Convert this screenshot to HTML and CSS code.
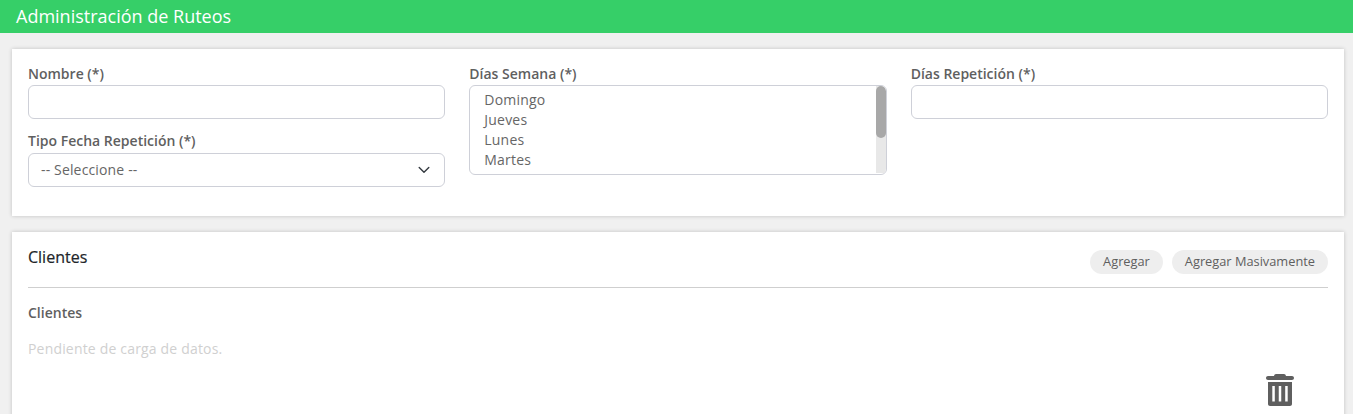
FILE: index.html
```html
<!DOCTYPE html>
<html lang="es">
<head>
<meta charset="utf-8">
<title>Administración de Ruteos</title>
<link rel="stylesheet" href="styles.css">
</head>
<body>
<header class="topbar">Administración de Ruteos</header>
<main class="content">
  <section class="card form-card">
    <div class="col">
      <label class="label">Nombre (*)</label>
      <div class="input"></div>
      <label class="label second">Tipo Fecha Repetición (*)</label>
      <div class="input select">
        <span>-- Seleccione --</span>
        <svg class="chevron" width="12" height="8" viewBox="0 0 12 8"><path d="M1.200 1.500l4.800 4.800 4.800-4.800" fill="none" stroke="#343a40" stroke-width="1.400" stroke-linecap="round" stroke-linejoin="round"/></svg>
      </div>
    </div>
    <div class="col">
      <label class="label">Días Semana (*)</label>
      <div class="listbox">
        <div class="options">
          <div class="option">Domingo</div>
          <div class="option">Jueves</div>
          <div class="option">Lunes</div>
          <div class="option">Martes</div>
        </div>
        <div class="track"><div class="thumb"></div></div>
      </div>
    </div>
    <div class="col">
      <label class="label">Días Repetición (*)</label>
      <div class="input"></div>
    </div>
  </section>
  <section class="card clients-card">
    <div class="card-head">
      <h2 class="card-title">Clientes</h2>
      <div class="actions">
        <button class="pill">Agregar</button>
        <button class="pill">Agregar Masivamente</button>
      </div>
    </div>
    <div class="body">
      <div class="label">Clientes</div>
      <p class="pending">Pendiente de carga de datos.</p>
      <div class="trash-row">
        <svg width="28" height="32" viewBox="0 0 28 32"><path fill="#5f5f5f" fill-rule="evenodd" d="M10 0h8c1 0 1.800.8 2 2h6c1.100 0 2 .9 2 2s-.9 2-2 2H2C.9 6 0 5.100 0 4s.9-2 2-2h6c.2-1.200 1-2 2-2zM2 8h24v22c0 1.100-.9 2-2 2H4c-1.100 0-2-.9-2-2V8zm4.300 4v15.500h2.500V12H6.300zm6.450 0v15.500h2.500V12h-2.500zm6.450 0v15.500h2.500V12h-2.500z"/></svg>
      </div>
    </div>
  </section>
</main>
</body>
</html>
```
FILE: styles.css
```css
* { box-sizing: border-box; }
html, body { margin: 0; height: 414px; overflow: hidden; }
body {
  background: #f0f0f0;
  font-family: "Open Sans", "Noto Sans", sans-serif;
  color: #5f5f5f;
  font-size: 14px;
}
.topbar {
  height: 33px;
  background: #36cf68;
  color: #fff;
  font-size: 18px;
  line-height: 32px;
  padding-left: 16px;
}
.content {
  padding: 16px 9px 0 12px;
  display: flex;
  flex-direction: column;
  gap: 16px;
}
.card {
  background: #fff;
  box-shadow: 0 0 4px rgba(0, 0, 0, 0.2);
}
.form-card {
  height: 167px;
  padding: 15px 16px 0;
  display: grid;
  grid-template-columns: repeat(3, 1fr);
  column-gap: 24px;
  align-items: start;
}
.label {
  display: block;
  font-size: 14px;
  font-weight: 600;
  line-height: 20px;
  color: #5f5f5f;
}
.label.second { margin-top: 12px; }
.input {
  height: 34px;
  margin-top: 1px;
  background: #fff;
  border: 1px solid #ced0d8;
  border-radius: 6px;
}
.select {
  margin-top: 2px;
  display: flex;
  align-items: center;
  justify-content: space-between;
  padding: 0 14px 2px 12px;
  font-size: 14px;
  letter-spacing: 0.15px;
  color: #666;
}
.chevron { margin-top: 2px; }
.listbox {
  height: 90px;
  margin-top: 1px;
  border: 1px solid #ced0d8;
  border-radius: 6px;
  display: flex;
  justify-content: space-between;
  overflow: hidden;
}
.options { padding: 4px 14px; }
.option {
  height: 20px;
  line-height: 20px;
  font-size: 14px;
  letter-spacing: 0.2px;
  color: #666;
}
.track {
  width: 10px;
  margin: 0 0 1px;
  background: #e8e8e8;
}
.thumb {
  height: 52px;
  background: #a8a8a8;
  border-radius: 5px;
}
.clients-card {
  height: 200px;
  padding: 0 16px;
}
.card-head {
  height: 56px;
  display: flex;
  justify-content: space-between;
  border-bottom: 1px solid #cfcfcf;
  padding-top: 18px;
}
.card-title {
  margin: 0;
  font-size: 16px;
  font-weight: 400;
  line-height: 15px;
  -webkit-text-stroke: 0.2px #212529;
  color: #212529;
}
.actions { display: flex; gap: 9px; height: 24px; }
.pill {
  border: 0;
  border-radius: 12px;
  background: #eeeeee;
  color: #5f5f5f;
  font: 400 12.800px "Open Sans", sans-serif;
  height: 24px;
  padding: 0 13px 2px;
}
.body { padding-top: 15px; }
.pending {
  margin: 16px 0 0;
  font-size: 14px;
  line-height: 20px;
  letter-spacing: 0.18px;
  color: #d0d0d0;
}
.trash-row {
  display: flex;
  justify-content: flex-end;
  padding-right: 34px;
  margin-top: 15px;
}
```
